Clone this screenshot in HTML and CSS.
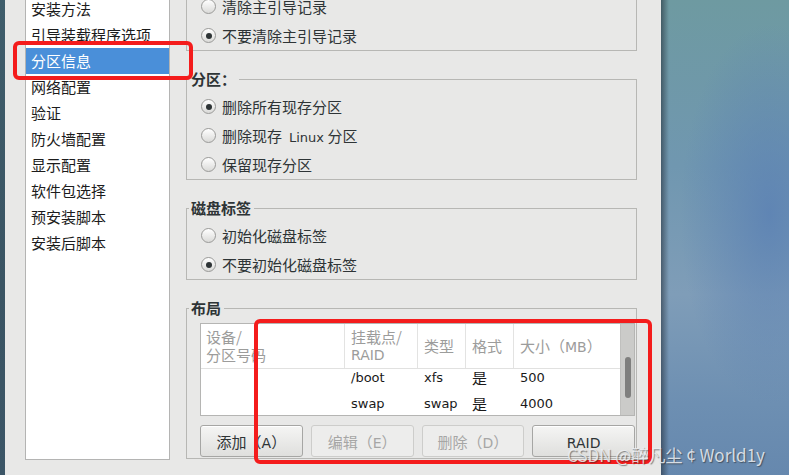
FILE: index.html
```html
<!DOCTYPE html>
<html lang="zh-CN">
<head>
<meta charset="utf-8">
<title>分区信息</title>
<link rel="stylesheet" href="styles.css">
</head>
<body>
<div class="screen">
  <div class="edge"></div>
  <div class="window">
    <ul class="nav">
      <li>基本配置</li>
      <li>安装方法</li>
      <li>引导装载程序选项</li>
      <li class="sel">分区信息</li>
      <li>网络配置</li>
      <li>验证</li>
      <li>防火墙配置</li>
      <li>显示配置</li>
      <li>软件包选择</li>
      <li>预安装脚本</li>
      <li>安装后脚本</li>
    </ul>
    <div class="main">
      <fieldset class="frame">
        <legend>主引导记录：</legend>
        <div class="opts">
          <div class="radio"><span class="dot"></span>清除主引导记录</div>
          <div class="radio"><span class="dot on"></span>不要清除主引导记录</div>
        </div>
      </fieldset>
      <fieldset class="frame">
        <legend>分区：</legend>
        <div class="opts">
          <div class="radio"><span class="dot on"></span>删除所有现存分区</div>
          <div class="radio"><span class="dot"></span><span>删除现存<span class="lat gap">Linux</span> 分区</span></div>
          <div class="radio"><span class="dot"></span>保留现存分区</div>
        </div>
      </fieldset>
      <fieldset class="frame">
        <legend>磁盘标签</legend>
        <div class="opts">
          <div class="radio"><span class="dot"></span>初始化磁盘标签</div>
          <div class="radio"><span class="dot on"></span>不要初始化磁盘标签</div>
        </div>
      </fieldset>
      <fieldset class="frame">
        <legend>布局</legend>
        <div class="layout">
          <div class="tablebox">
            <div class="grid">
              <div class="thead">
                <div class="th first"><span>设备/</span><span>分区号码</span></div>
                <div class="th"><span>挂载点/</span><span class="lat hl">RAID</span></div>
                <div class="th"><span>类型</span></div>
                <div class="th"><span>格式</span></div>
                <div class="th"><span>大小（<span class="lat hl">MB</span>）</span></div>
              </div>
              <div class="tbody">
                <div class="rows">
                  <div class="tr">
                    <div class="td first"></div>
                    <div class="td lat">/boot</div>
                    <div class="td lat">xfs</div>
                    <div class="td">是</div>
                    <div class="td lat">500</div>
                  </div>
                  <div class="tr">
                    <div class="td first"></div>
                    <div class="td lat">swap</div>
                    <div class="td lat">swap</div>
                    <div class="td">是</div>
                    <div class="td lat">4000</div>
                  </div>
                </div>
              </div>
            </div>
            <div class="scrollbar"><span class="thumb"></span></div>
          </div>
          <div class="btns">
            <button class="btn">添加（<span class="lat">A</span>）</button>
            <button class="btn" disabled>编辑（<span class="lat">E</span>）</button>
            <button class="btn" disabled>删除（<span class="lat">D</span>）</button>
            <button class="btn"><span class="lat">RAID</span></button>
          </div>
        </div>
      </fieldset>
    </div>
  </div>
  <div class="desktop"></div>
  <div class="mark mark-nav"></div>
  <div class="mark mark-table"></div>
  <div class="watermark">CSDN @醉凡尘 ¢ World1y</div>
</div>
</body>
</html>
```

FILE: styles.css
```css
* { box-sizing: border-box; }

body {
  margin: 0;
  font-family: "Noto Sans CJK SC", "DejaVu Sans", sans-serif;
  font-size: 15px;
  color: #2e3436;
}

.screen {
  position: relative;
  display: flex;
  width: 789px;
  height: 475px;
  overflow: hidden;
}

.edge {
  flex: 0 0 5px;
  background: linear-gradient(180deg, #3f5d6b, #3a5463 60%, #3c5667);
}

.window {
  flex: 0 0 656px;
  height: 475px;
  display: flex;
  align-items: flex-start;
  gap: 16px;
  padding: 0 24px 15px 20px;
  background: #e8e8e7;
}

.lat {
  font-family: "DejaVu Sans", sans-serif;
  font-size: 13px;
}

.lat.hl { font-size: 14px; }

.gap { margin: 0 0 0 7px; }

/* left list */
.nav {
  flex: 0 0 145px;
  height: 491px;
  margin: -31px 0 0;
  padding: 0;
  list-style: none;
  background: #fff;
  border: 1px solid #b4b4b3;
  color: #1c1c1c;
}

.nav li {
  height: 26px;
  line-height: 26px;
  padding-left: 5px;
  white-space: nowrap;
}

.nav li.sel {
  background: #4a8fd9;
  color: #fff;
}

/* right column */
.main {
  flex: 0 0 451px;
  margin-top: -30px;
  display: flex;
  flex-direction: column;
  gap: 19px;
}

.frame {
  margin: 0;
  padding: 0;
  min-width: 0;
  border: 1px solid #b7b7b4;
}

.frame legend {
  margin-left: 2px;
  padding: 0 3px 0 2px;
  line-height: 18px;
  font-weight: bold;
  color: #2e3436;
}

.opts {
  padding: 4px 0 0 14px;
}

.radio {
  display: flex;
  align-items: center;
  gap: 6px;
  height: 29px;
  white-space: nowrap;
}

.dot {
  flex: 0 0 15px;
  width: 15px;
  height: 15px;
  border-radius: 50%;
  border: 1px solid #9a9a98;
  background: linear-gradient(180deg, #ffffff, #dadad8);
  display: flex;
  align-items: center;
  justify-content: center;
}

.dot.on::after {
  content: "";
  width: 6px;
  height: 6px;
  border-radius: 50%;
  background: #2e3436;
}

/* layout frame */
.layout {
  padding: 6px 1px 1px 13px;
  display: flex;
  flex-direction: column;
  gap: 9px;
}

.tablebox {
  height: 93px;
  display: flex;
  background: #fff;
  border: 1px solid #b5b5b3;
}

.grid {
  flex: 1 1 auto;
  min-width: 0;
}

.thead, .tr {
  display: grid;
  grid-template-columns: 143px 73px 48px 48px 1fr;
}

.thead {
  height: 45px;
  border-bottom: 1px solid #e1e1e0;
}

.th {
  padding: 0 6px;
  line-height: 18px;
  color: #9c9c9b;
  border-left: 1px solid #e3e3e2;
  display: flex;
  flex-direction: column;
  justify-content: center;
  align-items: flex-start;
  white-space: nowrap;
}

.th.first {
  border-left: 0;
  padding-left: 5px;
}

.tbody {
  height: 46px;
  overflow: hidden;
}

.rows {
  margin-top: -4px;
}

.tr {
  height: 26px;
}

.td {
  padding: 0 6px 0 7px;
  line-height: 26px;
  color: #1a1a1a;
  white-space: nowrap;
}

.scrollbar {
  flex: 0 0 14px;
  background: #cbcbc9;
  border-left: 1px solid #c0c0be;
  padding: 33px 0 0 4px;
}

.thumb {
  display: block;
  width: 6px;
  height: 41px;
  border-radius: 3px;
  background: #7f7f7e;
}

.btns {
  display: grid;
  grid-template-columns: repeat(4, 1fr);
  gap: 8px;
}

.btn {
  height: 32px;
  font-family: "Noto Sans CJK SC", "DejaVu Sans", sans-serif;
  font-size: 15px;
  color: #2e3436;
  border: 1px solid #a6a6a4;
  border-radius: 3px;
  background: linear-gradient(180deg, #f5f5f4, #dfdfdd);
  box-shadow: inset 0 1px 0 #ffffff;
  padding: 0;
}

.btn .lat { font-size: 14px; }

.btn:disabled {
  color: #a6a6a5;
  border-color: #cdcdcb;
  background: #ededec;
  box-shadow: none;
}

/* desktop */
.desktop {
  flex: 1 1 auto;
  background:
    linear-gradient(90deg, rgba(30, 40, 50, 0.55), rgba(30, 40, 50, 0) 8px),
    radial-gradient(ellipse 70% 40% at 85% 45%, rgba(90, 128, 180, 0.8), rgba(90, 128, 180, 0) 100%),
    linear-gradient(180deg, #6e9aa1 0%, #7097b0 35%, #7f9db8 62%, #6d8fb2 85%, #6688ae 100%);
}

/* annotations */
.mark {
  position: absolute;
  border: 4px solid #f41c1c;
  border-radius: 6px;
}

.mark-nav {
  left: 13px;
  top: 41px;
  width: 180px;
  height: 39px;
}

.mark-table {
  left: 254px;
  top: 319px;
  width: 398px;
  height: 145px;
}

.watermark {
  position: absolute;
  left: 567px;
  top: 443px;
  line-height: 24px;
  font-size: 17px;
  white-space: nowrap;
  color: rgba(238, 240, 243, 0.85);
  text-shadow: 1px 1px 1px rgba(40, 40, 40, 0.55);
}
```
